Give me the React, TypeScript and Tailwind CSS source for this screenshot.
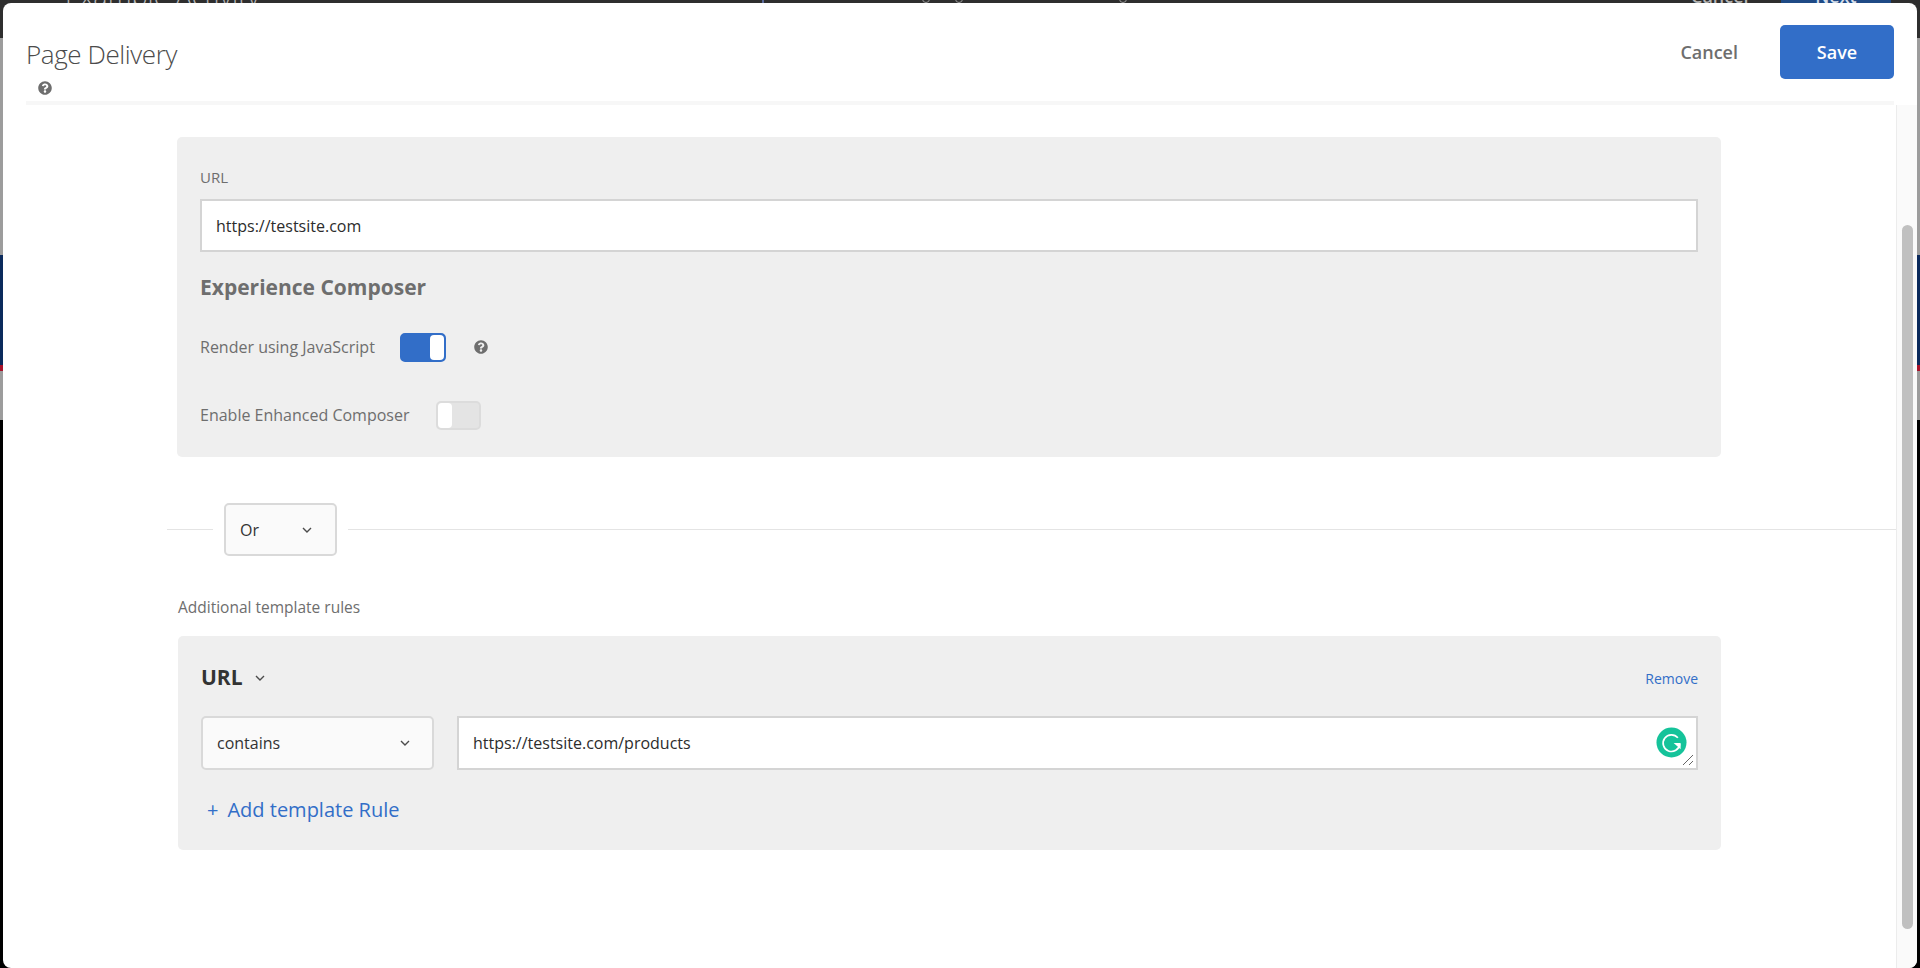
import React from 'react';
import { FaQuestionCircle } from 'react-icons/fa';

const Chevron = ({ className = '' }: { className?: string }) => (
  <svg viewBox="0 0 10 6" className={`h-[6px] w-[10px] ${className}`} fill="none" stroke="#4b4b4b" strokeWidth="1.4">
    <path d="M1 1l4 4 4-4" />
  </svg>
);

const Grammarly = () => (
  <svg viewBox="0 0 32 32" className="h-[31px] w-[31px]">
    <circle cx="16" cy="16" r="15.5" fill="#15c39a" />
    <path d="M22.6 11.2a8.6 8.6 0 1 0 1.9 6.4" fill="none" stroke="#fff" strokeWidth="1.7" />
    <path d="M18.2 16.4h7.2v6.6z" fill="#fff" />
  </svg>
);

const ResizeHandle = () => (
  <svg viewBox="0 0 12 12" className="absolute bottom-[2px] right-[2px] h-[12px] w-[12px]" stroke="#666" strokeWidth="1">
    <path d="M1 11L11 1M7 11l4-4" />
  </svg>
);

const TopStrip = () => (
  <div className="relative h-[38px] overflow-hidden bg-[#2e2e2e] text-[#b5b5b5]">
    <span className="absolute left-[65px] top-[-21px] text-[27px] leading-[34px] font-light">Example Activity</span>
    <span className="absolute left-[1691px] top-[-16px] text-[18px] leading-[24px] font-semibold">Cancel</span>
    <div className="absolute left-[1781px] top-0 flex h-[38px] w-[110px] justify-center bg-[#1f4a85]">
      <span className="mt-[-16px] text-[18px] leading-[24px] font-semibold text-[#d5deea]">Next</span>
    </div>
    <div className="absolute left-[762px] top-0 h-[3px] w-[2px] bg-[#5a6a9a]" />
    <div className="absolute left-[922px] top-[-5px] h-[8px] w-[8px] rounded-full border border-[#999]" />
    <div className="absolute left-[955px] top-[-5px] h-[8px] w-[8px] rounded-full border border-[#999]" />
    <div className="absolute left-[1119px] top-[-5px] h-[8px] w-[8px] rounded-full border border-[#999]" />
  </div>
);

const Backdrop = () => (
  <div className="absolute inset-0 flex flex-col bg-black">
    <TopStrip />
    <div className="h-[217px] bg-[#9c9c9c]" />
    <div className="h-[110px] bg-[#0b2a5c]" />
    <div className="h-[6px] bg-[#a8122a]" />
    <div className="h-[49px] bg-[#9c9c9c]" />
    <div className="flex-1 bg-black" />
  </div>
);

const Toggle = ({ on }: { on?: boolean }) =>
  on ? (
    <div className="flex h-[29px] w-[46px] justify-end rounded-[5px] border-2 border-[#326ec8] bg-[#326ec8]">
      <div className="w-[14px] rounded-[4px] bg-white" />
    </div>
  ) : (
    <div className="flex h-[29px] w-[45px] rounded-[5px] border-2 border-[#dcdcdc] bg-[#e4e4e4]">
      <div className="w-[14px] rounded-[4px] bg-white" />
    </div>
  );

export default function App() {
  return (
    <div
      className="relative h-[968px] w-[1920px] overflow-hidden text-[16px] text-[#6e6e6e]"
      style={{ fontFamily: '"Open Sans", "Noto Sans", sans-serif' }}
    >
      <Backdrop />

      <div className="absolute bottom-0 left-[3px] right-[3px] top-[3px] flex flex-col overflow-hidden rounded-[8px] bg-white">
        {/* Header */}
        <div className="flex h-[98px] shrink-0 items-start justify-between px-[23px]">
          <div className="pt-[31px]">
            <h1 className="text-[26px] leading-[40px] font-light tracking-[-0.4px] text-[#4b4b4b]">Page Delivery</h1>
            <FaQuestionCircle className="ml-[12px] mt-[7px] h-[14px] w-[14px] text-[#6e6e6e]" />
          </div>
          <div className="flex items-center pt-[22px] pr-[-1px]">
            <span className="mr-[42px] text-[18px] font-semibold text-[#6e6e6e]">Cancel</span>
            <button className="h-[54px] w-[114px] rounded-[5px] bg-[#326ec8] text-[18px] font-semibold text-white">
              Save
            </button>
          </div>
        </div>
        <div className="mx-[23px] h-[4px] shrink-0 bg-[#f7f7f7]" />

        <div className="flex min-h-0 flex-1">
          {/* Content */}
          <div className="flex-1 pl-[164px] pt-[32px]">
            <div className="ml-[10px] w-[1544px] rounded-[5px] bg-[#efefef] px-[23px] pb-[27px] pt-[30px]">
              <div className="text-[15px] leading-[20px]">URL</div>
              <div className="mt-[12px] flex h-[53px] items-center border-2 border-[#d4d4d4] bg-white pl-[14px] text-[#2c2c2c]">
                https://testsite.com
              </div>
              <h2 className="mt-[20px] text-[21px] leading-[30px] font-bold text-[#6e6e6e]">Experience Composer</h2>
              <div className="mt-[30px] flex h-[30px] items-center">
                <span className="w-[200px]">Render using JavaScript</span>
                <Toggle on />
                <FaQuestionCircle className="ml-[28px] h-[14px] w-[14px] text-[#6e6e6e]" />
              </div>
              <div className="mt-[38px] flex h-[30px] items-center">
                <span className="w-[236px]">Enable Enhanced Composer</span>
                <Toggle />
              </div>
            </div>

            {/* Or divider */}
            <div className="mt-[46px] flex items-center">
              <div className="h-px w-[46px] bg-[#e4e4e4]" />
              <div className="mx-[11px] flex h-[53px] w-[113px] items-center justify-between rounded-[5px] border-2 border-[#d9d9d9] bg-[#fafafa] pl-[14px] pr-[23px] text-[#333]">
                Or
                <Chevron />
              </div>
              <div className="h-px flex-1 bg-[#e4e4e4]" />
            </div>

            <div className="ml-[11px] mt-[41px] text-[15.5px] leading-[20px]">Additional template rules</div>

            <div className="ml-[11px] mt-[19px] h-[214px] w-[1543px] rounded-[5px] bg-[#efefef] px-[23px] pt-[27px]">
              <div className="flex h-[30px] items-center justify-between">
                <div className="flex items-center">
                  <span className="text-[21px] font-bold text-[#333]">URL</span>
                  <Chevron className="ml-[12px]" />
                </div>
                <span className="text-[14px] font-medium text-[#326ec8]">Remove</span>
              </div>
              <div className="mt-[23px] flex h-[54px] gap-[23px]">
                <div className="flex w-[233px] items-center justify-between rounded-[5px] border-2 border-[#d9d9d9] bg-[#fafafa] pl-[14px] pr-[22px] text-[#333]">
                  contains
                  <Chevron />
                </div>
                <div className="relative flex flex-1 items-center border-2 border-[#d4d4d4] bg-white pl-[14px] text-[#2c2c2c]">
                  https://testsite.com/products
                  <div className="absolute right-[9px] top-[9px]">
                    <Grammarly />
                  </div>
                  <ResizeHandle />
                </div>
              </div>
              <div className="ml-[6px] mt-[25px] flex h-[30px] items-center gap-[9px] text-[20px] text-[#326ec8]">
                <span>+</span>
                <span>Add template Rule</span>
              </div>
            </div>
          </div>

          {/* Scrollbar */}
          <div className="w-[21px] shrink-0 border-l border-[#ececec] bg-[#fafafa] pl-[5px] pt-[120px]">
            <div className="h-[704px] w-[11px] rounded-full bg-[#c0c0c0]" />
          </div>
        </div>
      </div>
    </div>
  );
}
